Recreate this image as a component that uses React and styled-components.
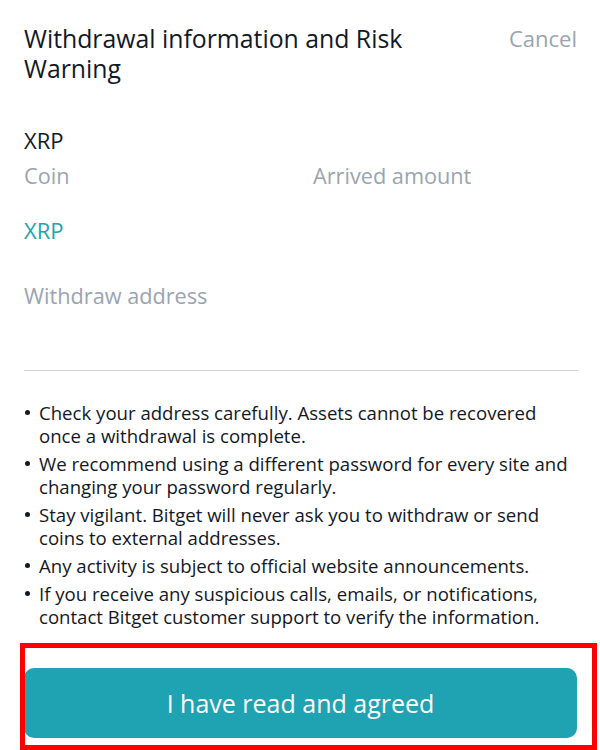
import styled, { createGlobalStyle } from "styled-components";

const GlobalStyle = createGlobalStyle`
  html, body {
    margin: 0;
    padding: 0;
    background: #ffffff;
  }
  body {
    font-family: "Open Sans", Lato, "Liberation Sans", sans-serif;
    color: #121826;
  }
`;

const notices = [
  ["Check your address carefully. Assets cannot be recovered", "once a withdrawal is complete."],
  ["We recommend using a different password for every site and", "changing your password regularly."],
  ["Stay vigilant. Bitget will never ask you to withdraw or send", "coins to external addresses."],
  ["Any activity is subject to official website announcements."],
  ["If you receive any suspicious calls, emails, or notifications,", "contact Bitget customer support to verify the information."],
];

const App = () => {
  return (
    <Sheet>
      <GlobalStyle />
      <Header>
        <Title>Withdrawal information and Risk Warning</Title>
        <Cancel>Cancel</Cancel>
      </Header>

      <InfoGrid>
        <Value>XRP</Value>
        <Value />
        <Label>Coin</Label>
        <Label>Arrived amount</Label>
      </InfoGrid>

      <Network>XRP</Network>

      <AddressBlock>
        <Label>Withdraw address</Label>
      </AddressBlock>

      <Divider />

      <NoticeList>
        {notices.map((lines, i) => (
          <NoticeItem key={i}>
            <Dot />
            <NoticeText>
              {lines.map((l, j) => (
                <span key={j}>
                  {l}
                  {j < lines.length - 1 && <br />}
                </span>
              ))}
            </NoticeText>
          </NoticeItem>
        ))}
      </NoticeList>

      <Footer>
        <AgreeButton>I have read and agreed</AgreeButton>
        <Highlight />
      </Footer>
    </Sheet>
  );
};

export default App;

const Sheet = styled.div`
  width: 600px;
  height: 750px;
  box-sizing: border-box;
  padding: 23px 23px 0 24px;
  overflow: hidden;
  position: relative;
`;

const Header = styled.div`
  display: flex;
  justify-content: space-between;
  align-items: flex-start;
`;

const Title = styled.h1`
  margin: 0;
  max-width: 420px;
  font-size: 24.8px;
  line-height: 30px;
  font-weight: 400;
  color: #121826;
`;

const Cancel = styled.span`
  font-size: 22px;
  line-height: 30px;
  color: #9aa4b0;
`;

const InfoGrid = styled.div`
  display: grid;
  grid-template-columns: 289px 1fr;
  margin-top: 44px;
  row-gap: 8px;
`;

const Value = styled.div`
  font-size: 22px;
  line-height: 27px;
  min-height: 27px;
  color: #121826;
`;

const Label = styled.div`
  font-size: 21.7px;
  line-height: 27px;
  color: #9aa4b0;
`;

const Network = styled.div`
  margin-top: 28px;
  font-size: 22px;
  line-height: 27px;
  color: #1ea3b0;
`;

const AddressBlock = styled.div`
  margin-top: 38px;
  height: 88px;
`;

const Divider = styled.div`
  height: 1px;
  background: #cfd3d8;
  margin-right: -1px;
`;

const NoticeList = styled.ul`
  list-style: none;
  margin: 30px 0 0;
  padding: 0;
  display: flex;
  flex-direction: column;
  gap: 5px;
`;

const NoticeItem = styled.li`
  display: flex;
  align-items: flex-start;
`;

const Dot = styled.span`
  flex: none;
  width: 5px;
  height: 5px;
  border-radius: 50%;
  background: #121826;
  margin: 9px 9px 0 1px;
`;

const NoticeText = styled.p`
  margin: 0;
  font-size: 18.6px;
  line-height: 23px;
  color: #121826;
  white-space: nowrap;
`;

const Footer = styled.div`
  position: relative;
  margin-top: 40px;
`;

const AgreeButton = styled.button`
  display: flex;
  align-items: center;
  justify-content: center;
  width: 553px;
  height: 70px;
  border: none;
  border-radius: 10px;
  background: #1fa2b1;
  color: #ffffff;
  font-family: "Open Sans", Lato, sans-serif;
  font-size: 25px;
  font-weight: 400;
  padding: 0;
`;

const Highlight = styled.div`
  position: absolute;
  left: -4px;
  top: -25px;
  width: 577px;
  height: 107px;
  box-sizing: border-box;
  border: 5px solid #ff0000;
  pointer-events: none;
`;
